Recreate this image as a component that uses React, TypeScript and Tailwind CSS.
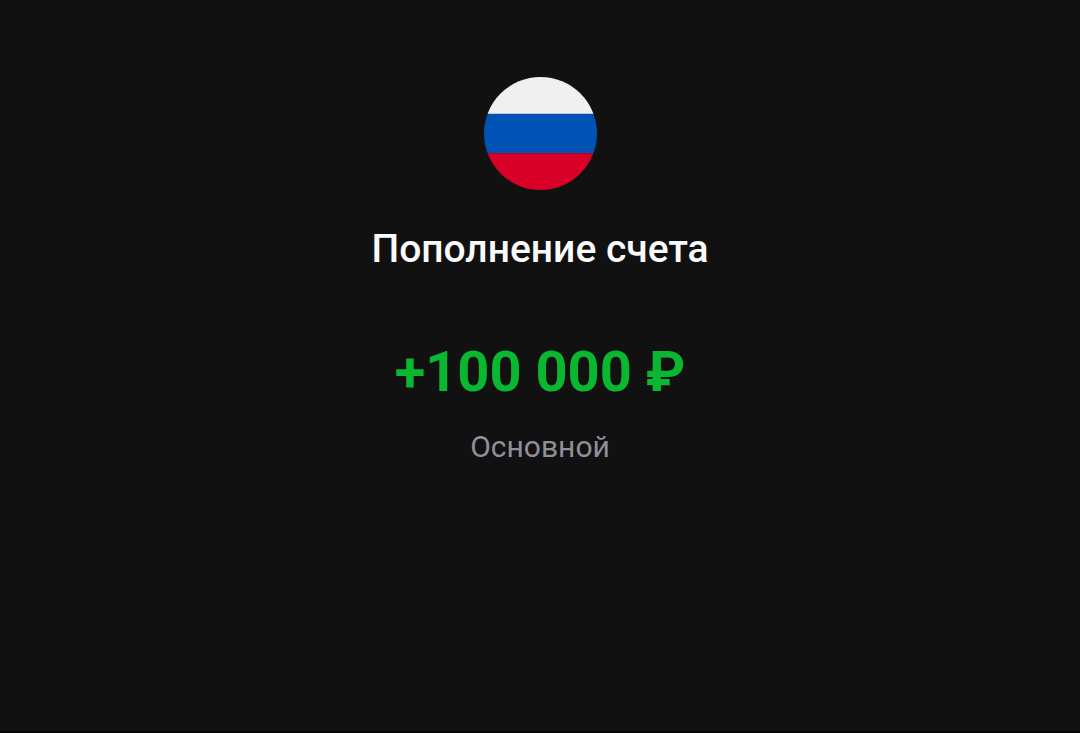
const transfer = {
  title: 'Пополнение счета',
  amount: '+100 000 ₽',
  account: 'Основной',
}

function RussiaFlag() {
  return (
    <svg viewBox="0 0 512 512" className="size-[113px] rounded-full" role="img" aria-label="RUB">
      <path fill="#f0f0f0" d="M0 0h512v168H0z" />
      <path fill="#0052b4" d="M0 167h512v179H0z" />
      <path fill="#d80027" d="M0 345h512v167H0z" />
    </svg>
  )
}

export default function App() {
  return (
    <main className="flex min-h-screen flex-col items-center border-b-2 border-[#080305] bg-[#111111] px-6 pt-[77px] text-center font-['Roboto',sans-serif]">
      <RussiaFlag />
      <h1 className="mt-8 text-[39px] leading-[54px] font-medium text-[#fafafa]">{transfer.title}</h1>
      <p className="mt-16 text-[56px] leading-[64px] font-bold text-[#0ab731]">{transfer.amount}</p>
      <p className="mt-6 text-[30px] leading-[38px] text-[#8e8f98]">{transfer.account}</p>
    </main>
  )
}
